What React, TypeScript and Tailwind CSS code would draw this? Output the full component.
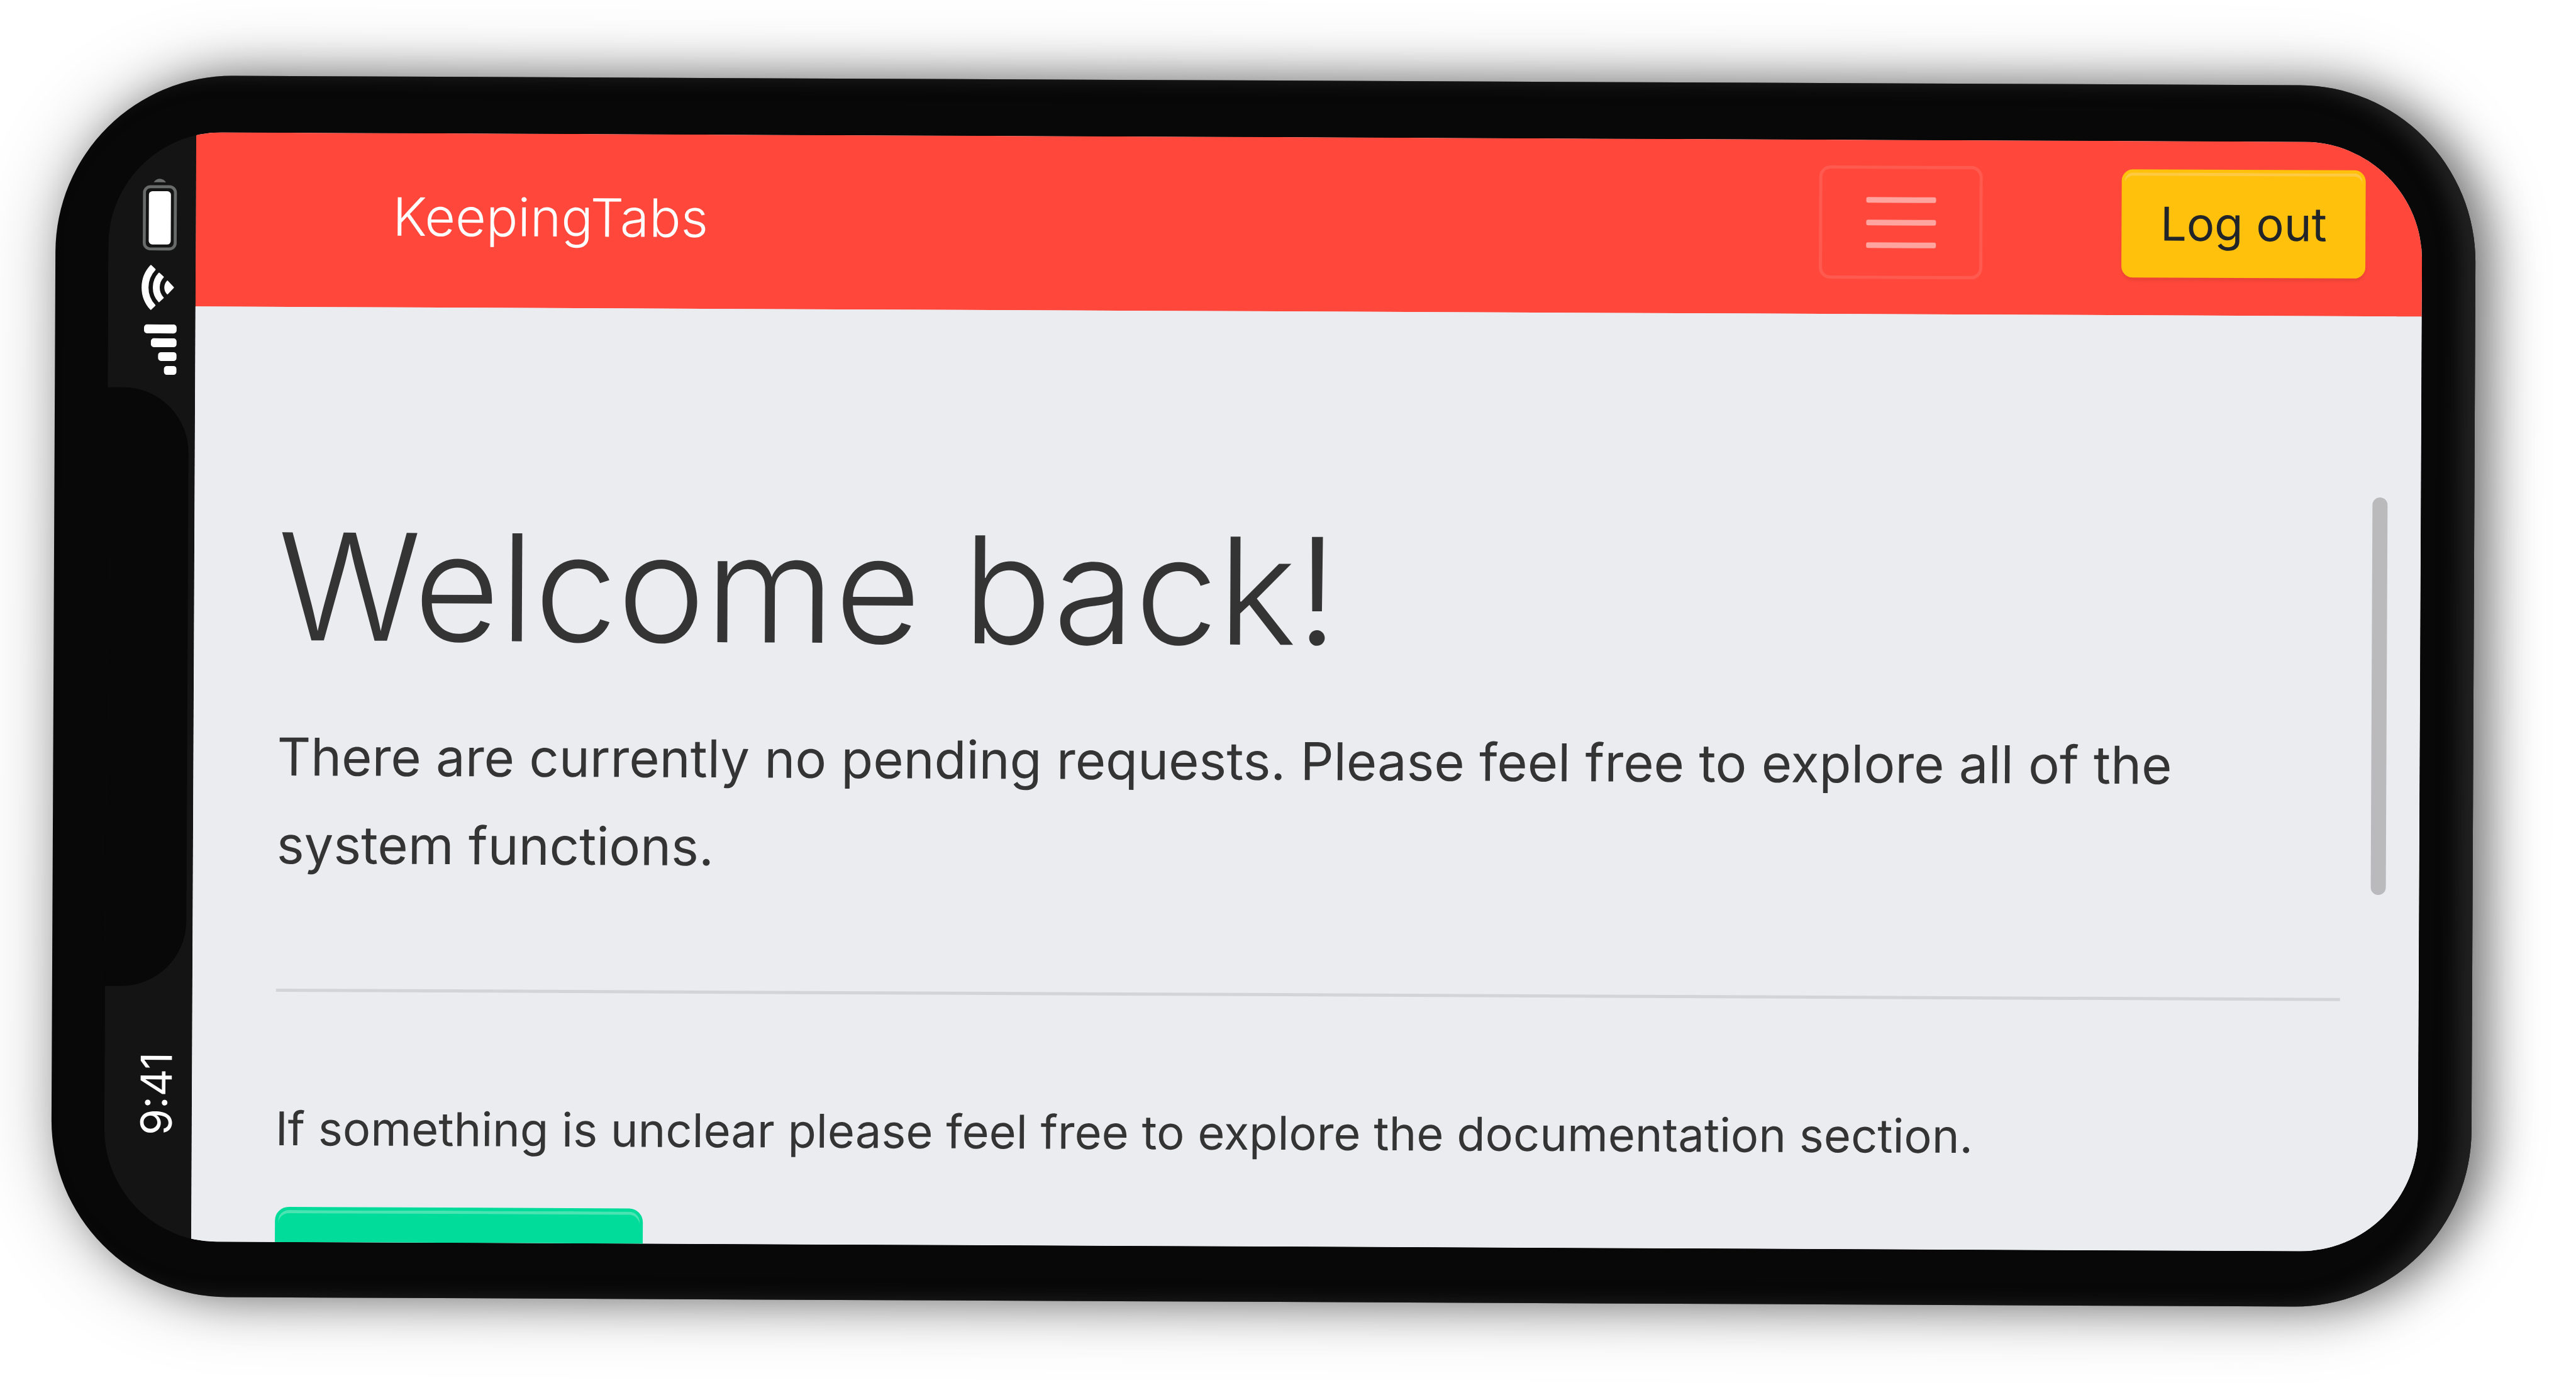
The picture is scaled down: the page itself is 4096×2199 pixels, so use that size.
function StatusIcons() {
  return (
    <svg viewBox="0 0 112 600" className="h-[314px] w-[59px]" aria-hidden="true">
      <path d="M37.5 13 A21.5 21.5 0 0 1 74.5 13 Z" fill="#6b6e6c" />
      <rect x="9.5" y="26.5" width="94" height="189" rx="18" fill="none" stroke="#686b69" strokeWidth="9" />
      <rect x="23" y="40" width="67" height="162" rx="11" fill="#fff" />
      <g fill="#fff" stroke="#fff" strokeWidth="4" strokeLinejoin="round">
        <path d="M30.1 266.3 A97 97 0 0 0 30.1 398.7 L42.5 387.1 A80 80 0 0 1 42.5 277.9 Z" />
        <path d="M55 289.5 A63 63 0 0 0 55 375.5 L67.4 363.9 A46 46 0 0 1 67.4 301.1 Z" />
        <path d="M80.5 313.4 A28 28 0 0 0 80.5 351.6 L98.5 332.5 Z" />
      </g>
      <g fill="#fff">
        <rect x="10" y="445" width="99" height="27" rx="9" />
        <rect x="31" y="487" width="78" height="27" rx="9" />
        <rect x="53" y="529" width="56" height="27" rx="9" />
        <rect x="71" y="571" width="38" height="27" rx="9" />
      </g>
    </svg>
  );
}

function StatusBar() {
  return (
    <aside className="relative flex w-[139px] shrink-0 flex-col justify-between bg-[#141414] pt-[73px] pb-[169px]">
      <div className="absolute top-1/2 left-0 h-[952px] w-[129px] -translate-y-1/2 rounded-r-[104px] bg-[#080808]" />
      <div className="flex justify-center pl-[24px]">
        <StatusIcons />
      </div>
      <div className="flex justify-center pl-[24px]">
        <time className="rotate-180 text-[68px] leading-[80px] text-white [writing-mode:vertical-rl]">9:41</time>
      </div>
    </aside>
  );
}

function NavBar() {
  return (
    <header className="flex h-[277px] shrink-0 items-center bg-[#ff483b] pr-[90px] pb-[15px] pl-[313px]">
      <a href="#" className="mr-auto pt-[4px] text-[84px] leading-[120px] font-light text-white">
        KeepingTabs
      </a>
      <button
        type="button"
        aria-label="Toggle navigation"
        className="mr-[221px] flex h-[180px] w-[260px] flex-col items-center justify-center gap-[27px] rounded-[18px] border-[5px] border-white/10"
      >
        <span className="h-[9px] w-[111px] rounded-[3px] bg-[#ffa49e]" />
        <span className="h-[9px] w-[111px] rounded-[3px] bg-[#ffa49e]" />
        <span className="h-[9px] w-[111px] rounded-[3px] bg-[#ffa49e]" />
      </button>
      <button
        type="button"
        className="h-[172px] w-[388px] rounded-[18px] border-[5px] border-[#ffc10c] bg-[#ffc10c] text-[74px] leading-[110px] text-[#212529] shadow-[inset_0_5px_0_#ffca43,0_5px_5px_rgb(0_0_0/0.08)]"
      >
        Log out
      </button>
    </header>
  );
}

function Welcome() {
  return (
    <main className="relative min-h-0 flex-1 overflow-hidden bg-[#ebecf0] pt-[296px] pr-[125px] pl-[133px] text-[#343434]">
      <h1 className="text-[236px] leading-[296px] font-light">Welcome back!</h1>
      <p className="mt-[53px] text-[83px] leading-[140px]">
        There are currently no pending requests. Please feel free to explore all of the system functions.
      </p>
      <hr className="mt-[159px] border-t-[5px] border-[#d3d4d8]" />
      <p className="mt-[162px] text-[74px] leading-[110px]">
        If something is unclear please feel free to explore the documentation section.
      </p>
      <button
        type="button"
        aria-label="Documentation"
        className="mt-[70px] block h-[220px] w-[585px] rounded-[22px] border-[5px] border-[#02dc9a] bg-[#02dc9a] shadow-[inset_0_5px_0_#4ae4b3]"
      />
      <div className="absolute top-[288px] right-[53px] h-[632px] w-[24px] rounded-full bg-[#bababc]" />
    </main>
  );
}

export default function App() {
  return (
    <div className="flex h-screen overflow-hidden bg-white pt-[128px] pr-[163px] pb-[129px] pl-[85px] font-['Inter',sans-serif]">
      <div className="flex min-w-0 flex-1 rotate-[0.26deg] rounded-[281px] bg-[#080808] pt-[90px] pr-[85px] pb-[88px] pl-[84px] shadow-[inset_-25px_0_30px_#222222,25px_0_70px_rgb(0_0_0/0.45),0_0_120px_rgb(0_0_0/0.25)]">
        <div className="flex min-w-0 flex-1 overflow-hidden rounded-l-[180px] rounded-r-[188px]">
          <StatusBar />
          <div className="flex min-w-0 flex-1 flex-col bg-[#ebecf0]">
            <NavBar />
            <Welcome />
          </div>
        </div>
      </div>
    </div>
  );
}
